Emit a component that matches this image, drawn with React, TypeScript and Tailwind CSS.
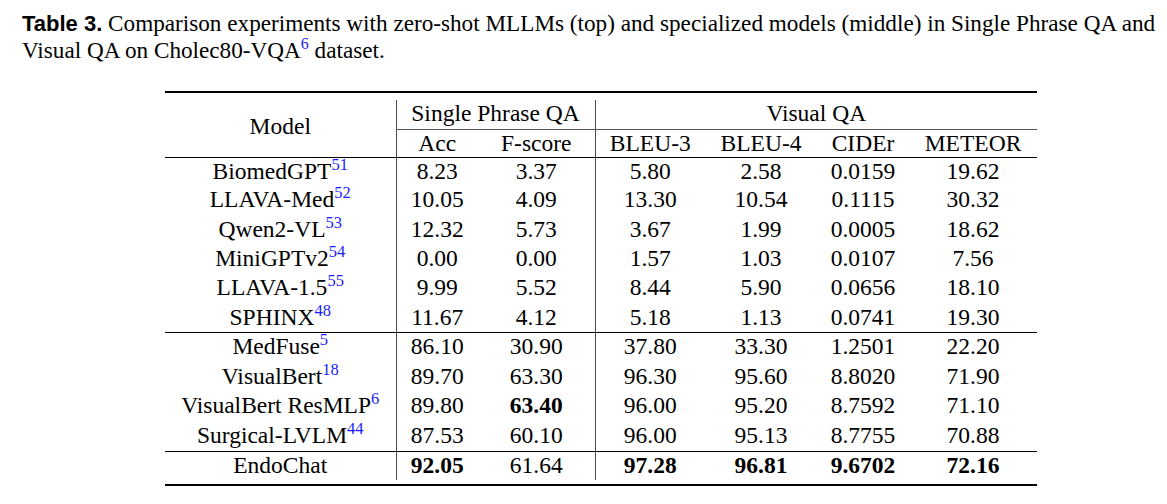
type Row = {
    name: string;
    cite?: string;
    vals: string[];
    bold?: number[];
};

const topRows: Row[] = [
    { name: "BiomedGPT", cite: "51", vals: ["8.23", "3.37", "5.80", "2.58", "0.0159", "19.62"] },
    { name: "LLAVA-Med", cite: "52", vals: ["10.05", "4.09", "13.30", "10.54", "0.1115", "30.32"] },
    { name: "Qwen2-VL", cite: "53", vals: ["12.32", "5.73", "3.67", "1.99", "0.0005", "18.62"] },
    { name: "MiniGPTv2", cite: "54", vals: ["0.00", "0.00", "1.57", "1.03", "0.0107", "7.56"] },
    { name: "LLAVA-1.5", cite: "55", vals: ["9.99", "5.52", "8.44", "5.90", "0.0656", "18.10"] },
    { name: "SPHINX", cite: "48", vals: ["11.67", "4.12", "5.18", "1.13", "0.0741", "19.30"] },
];

const midRows: Row[] = [
    { name: "MedFuse", cite: "5", vals: ["86.10", "30.90", "37.80", "33.30", "1.2501", "22.20"] },
    { name: "VisualBert", cite: "18", vals: ["89.70", "63.30", "96.30", "95.60", "8.8020", "71.90"] },
    { name: "VisualBert ResMLP", cite: "6", vals: ["89.80", "63.40", "96.00", "95.20", "8.7592", "71.10"], bold: [1] },
    { name: "Surgical-LVLM", cite: "44", vals: ["87.53", "60.10", "96.00", "95.13", "8.7755", "70.88"] },
];

const ours: Row = { name: "EndoChat", vals: ["92.05", "61.64", "97.28", "96.81", "9.6702", "72.16"], bold: [0, 2, 3, 4, 5] };

function Cite({ n }: { n: string }) {
    return <sup className="text-[16.5px] -top-[9px] text-[#1c1cff]">{n}</sup>;
}

function TableRow({ row, h, rule }: { row: Row; h: string; rule?: boolean }) {
    const line = rule ? "border-b border-black" : "";
    return (
        <tr>
            <td className={`${h} ${line} p-0 align-top text-center`}>
                {row.name}
                {row.cite && <Cite n={row.cite} />}
            </td>
            {row.vals.map((v, i) => (
                <td
                    key={i}
                    className={`${h} ${line} p-0 align-top text-center ${i == 0 || i == 2 ? "border-l border-l-[#4a4a4a]" : ""} ${row.bold?.includes(i) ? "font-bold" : ""}`}
                >
                    {v}
                </td>
            ))}
        </tr>
    );
}

export default function App() {
    return (
        <div className="w-[1167px] h-[504px] bg-white text-black overflow-hidden">
            <p className="pt-[10px] pl-[22px] text-[23.2px] leading-[26px] [font-family:'Liberation_Serif',serif]">
                <span className="font-bold text-[22px] [font-family:'Liberation_Sans',Arial,sans-serif]">Table 3.</span> Comparison experiments with zero-shot MLLMs (top) and specialized models (middle) in Single Phrase QA and
                <br />
                Visual QA on Cholec80-VQA<sup className="text-[16px] -top-[9px] text-[#1c1cff]">6</sup> dataset.
            </p>

            <div className="ml-[165px] w-[872px] mt-[28px] [font-family:'Liberation_Serif',serif] text-[23.5px] leading-[26px]">
                <div className="h-[2px] bg-black" />
                <table className="mt-[7px] w-full table-fixed border-collapse">
                    <colgroup>
                        <col className="w-[231px]" />
                        <col className="w-[82px]" />
                        <col className="w-[117px]" />
                        <col className="w-[110px]" />
                        <col className="w-[112px]" />
                        <col className="w-[92px]" />
                        <col className="w-[128px]" />
                    </colgroup>
                    <thead>
                        <tr>
                            <th rowSpan={2} className="p-0 pt-[13px] align-top font-normal text-center border-b border-black">
                                Model
                            </th>
                            <th colSpan={2} className="h-[29px] p-0 align-top font-normal text-center border-l border-l-[#4a4a4a] border-b border-b-[#555]">
                                Single Phrase QA
                            </th>
                            <th colSpan={4} className="h-[29px] p-0 align-top font-normal text-center border-l border-l-[#4a4a4a] border-b border-b-[#555]">
                                Visual QA
                            </th>
                        </tr>
                        <tr>
                            {["Acc", "F-score", "BLEU-3", "BLEU-4", "CIDEr", "METEOR"].map((c, i) => (
                                <th
                                    key={c}
                                    className={`h-[28px] p-0 align-top font-normal text-center border-b border-black ${i == 0 || i == 2 ? "border-l border-l-[#4a4a4a]" : ""}`}
                                >
                                    {c}
                                </th>
                            ))}
                        </tr>
                    </thead>
                    <tbody>
                        {topRows.map((r, i) => (
                            <TableRow key={r.name} row={r} h="h-[29.33px]" rule={i == topRows.length - 1} />
                        ))}
                        {midRows.map((r, i) => (
                            <TableRow key={r.name} row={r} h="h-[29.67px]" rule={i == midRows.length - 1} />
                        ))}
                        <TableRow row={ours} h="h-[28px]" />
                    </tbody>
                </table>
                <div className="mt-[4px] h-[2.5px] bg-black" />
            </div>
        </div>
    );
}
